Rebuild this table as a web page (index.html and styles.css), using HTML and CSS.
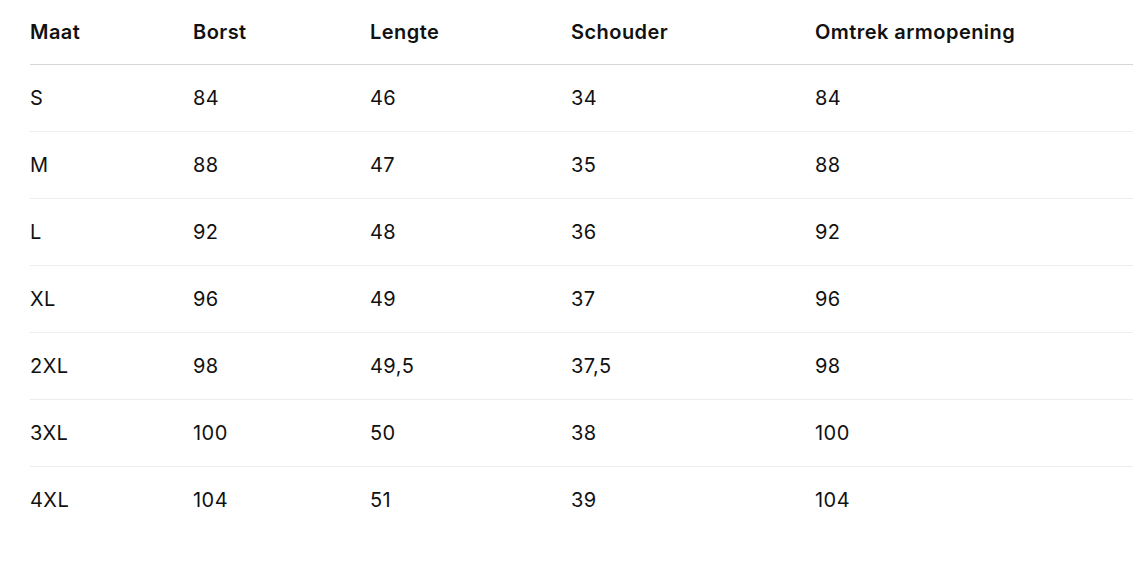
FILE: index.html
```html
<!DOCTYPE html>
<html lang="nl">
<head>
<meta charset="utf-8">
<title>Maattabel</title>
<link rel="stylesheet" href="styles.css">
</head>
<body>
<div class="wrap">
<table class="size-table">
  <colgroup>
    <col class="c1"><col class="c2"><col class="c3"><col class="c4"><col class="c5">
  </colgroup>
  <thead>
    <tr><th>Maat</th><th>Borst</th><th>Lengte</th><th>Schouder</th><th>Omtrek armopening</th></tr>
  </thead>
  <tbody>
    <tr><td>S</td><td>84</td><td>46</td><td>34</td><td>84</td></tr>
    <tr><td>M</td><td>88</td><td>47</td><td>35</td><td>88</td></tr>
    <tr><td>L</td><td>92</td><td>48</td><td>36</td><td>92</td></tr>
    <tr><td>XL</td><td>96</td><td>49</td><td>37</td><td>96</td></tr>
    <tr><td>2XL</td><td>98</td><td>49,5</td><td>37,5</td><td>98</td></tr>
    <tr><td>3XL</td><td>100</td><td>50</td><td>38</td><td>100</td></tr>
    <tr><td>4XL</td><td>104</td><td>51</td><td>39</td><td>104</td></tr>
  </tbody>
</table>
</div>
</body>
</html>
```

FILE: styles.css
```css
html, body {
  margin: 0;
  padding: 0;
  background: #ffffff;
}
body {
  font-family: Inter, "Liberation Sans", sans-serif;
  color: #111111;
}
.wrap {
  padding: 0 11px 0 30px;
}
.size-table {
  width: 100%;
  border-collapse: collapse;
  table-layout: fixed;
  font-size: 20px;
  letter-spacing: 0.45px;
}
.c1 { width: 163px; }
.c2 { width: 177px; }
.c3 { width: 201px; }
.c4 { width: 244px; }
.c5 { width: auto; }
.size-table th,
.size-table td {
  text-align: left;
  padding: 0;
  vertical-align: middle;
}
.size-table th {
  font-weight: 600;
  height: 64px;
  border-bottom: 1px solid #d6d6d6;
}
.size-table td {
  font-weight: 400;
  height: 66px;
  border-bottom: 1px solid #ededed;
}
.size-table tbody tr:last-child td {
  border-bottom: none;
}
```
